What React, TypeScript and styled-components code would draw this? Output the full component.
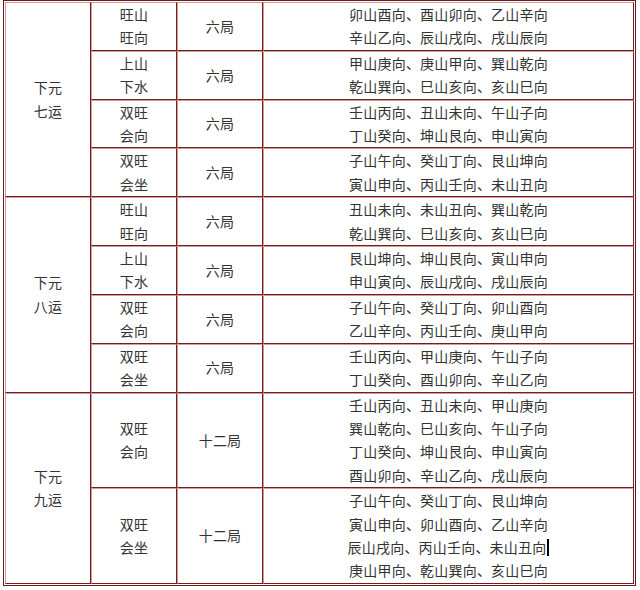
import React from "react";
import styled, { createGlobalStyle } from "styled-components";

const Global = createGlobalStyle`
  html, body { margin: 0; padding: 0; background: #ffffff; }
  body { font-family: "Noto Sans CJK SC", "Noto Sans", sans-serif; }
`;

const Table = styled.table`
  margin: 0 0 0 3px;
  width: 633px;
  border-collapse: separate;
  border-spacing: 0;
  border: 1px solid #6a1c1c;
  padding: 1px;
  table-layout: fixed;
  box-sizing: border-box;
`;

const Col = styled.col<{ $w: number }>`
  width: ${(p) => p.$w}px;
`;

const Cell = styled.td`
  border-style: solid;
  border-width: 1px;
  border-color: #d79a9a #6e1f1f #6e1f1f #d79a9a;
  padding: 0;
  text-align: center;
  vertical-align: middle;
  font-size: 14px;
  line-height: 23.4px;
  letter-spacing: 0.2px;
  color: #333333;
  white-space: nowrap;
`;

const Line = styled.div`
  display: block;
`;

const Caret = styled.span`
  display: inline-block;
  width: 2px;
  height: 17px;
  background: #000000;
  vertical-align: -3px;
  margin-left: 1px;
`;

type Row = { type: string[]; ju: string; dirs: string[] };
type Group = { name: string[]; rows: Row[] };

const groups: Group[] = [
  {
    name: ["下元", "七运"],
    rows: [
      { type: ["旺山", "旺向"], ju: "六局", dirs: ["卯山酉向、酉山卯向、乙山辛向", "辛山乙向、辰山戌向、戌山辰向"] },
      { type: ["上山", "下水"], ju: "六局", dirs: ["甲山庚向、庚山甲向、巽山乾向", "乾山巽向、巳山亥向、亥山巳向"] },
      { type: ["双旺", "会向"], ju: "六局", dirs: ["壬山丙向、丑山未向、午山子向", "丁山癸向、坤山艮向、申山寅向"] },
      { type: ["双旺", "会坐"], ju: "六局", dirs: ["子山午向、癸山丁向、艮山坤向", "寅山申向、丙山壬向、未山丑向"] },
    ],
  },
  {
    name: ["下元", "八运"],
    rows: [
      { type: ["旺山", "旺向"], ju: "六局", dirs: ["丑山未向、未山丑向、巽山乾向", "乾山巽向、巳山亥向、亥山巳向"] },
      { type: ["上山", "下水"], ju: "六局", dirs: ["艮山坤向、坤山艮向、寅山申向", "申山寅向、辰山戌向、戌山辰向"] },
      { type: ["双旺", "会向"], ju: "六局", dirs: ["子山午向、癸山丁向、卯山酉向", "乙山辛向、丙山壬向、庚山甲向"] },
      { type: ["双旺", "会坐"], ju: "六局", dirs: ["壬山丙向、甲山庚向、午山子向", "丁山癸向、酉山卯向、辛山乙向"] },
    ],
  },
  {
    name: ["下元", "九运"],
    rows: [
      {
        type: ["双旺", "会向"],
        ju: "十二局",
        dirs: ["壬山丙向、丑山未向、甲山庚向", "巽山乾向、巳山亥向、午山子向", "丁山癸向、坤山艮向、申山寅向", "酉山卯向、辛山乙向、戌山辰向"],
      },
      {
        type: ["双旺", "会坐"],
        ju: "十二局",
        dirs: ["子山午向、癸山丁向、艮山坤向", "寅山申向、卯山酉向、乙山辛向", "辰山戌向、丙山壬向、未山丑向|", "庚山甲向、乾山巽向、亥山巳向"],
      },
    ],
  },
];

function Lines({ items }: { items: string[] }) {
  return (
    <>
      {items.map((t, i) =>
        t.endsWith("|") ? (
          <Line key={i}>
            {t.slice(0, -1)}
            <Caret />
          </Line>
        ) : (
          <Line key={i}>{t}</Line>
        )
      )}
    </>
  );
}

export default function App() {
  return (
    <>
      <Global />
      <Table>
        <colgroup>
          <Col $w={86} />
          <Col $w={86} />
          <Col $w={86} />
          <Col $w={371} />
        </colgroup>
        <tbody>
          {groups.map((g, gi) =>
            g.rows.map((r, ri) => (
              <tr key={`${gi}-${ri}`}>
                {ri === 0 && (
                  <Cell rowSpan={g.rows.length}>
                    <Lines items={g.name} />
                  </Cell>
                )}
                <Cell>
                  <Lines items={r.type} />
                </Cell>
                <Cell>{r.ju}</Cell>
                <Cell>
                  <Lines items={r.dirs} />
                </Cell>
              </tr>
            ))
          )}
        </tbody>
      </Table>
    </>
  );
}
